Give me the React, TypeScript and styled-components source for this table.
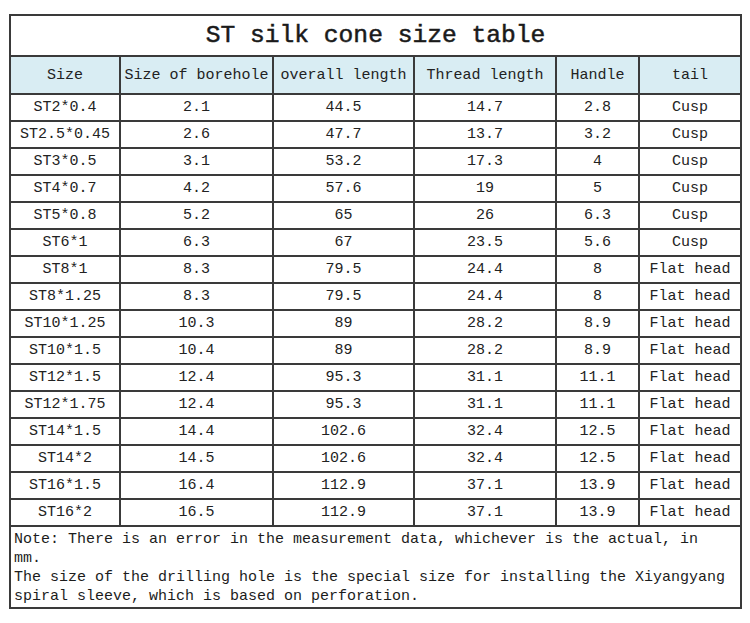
import styled, { createGlobalStyle } from "styled-components";

const GlobalStyle = createGlobalStyle`
  html, body {
    margin: 0;
    padding: 0;
    background: #ffffff;
  }
  body {
    font-family: "Liberation Mono", "DejaVu Sans Mono", monospace;
    color: #1c1c1c;
  }
`;

const ROWS: string[][] = [
  ["ST2*0.4", "2.1", "44.5", "14.7", "2.8", "Cusp"],
  ["ST2.5*0.45", "2.6", "47.7", "13.7", "3.2", "Cusp"],
  ["ST3*0.5", "3.1", "53.2", "17.3", "4", "Cusp"],
  ["ST4*0.7", "4.2", "57.6", "19", "5", "Cusp"],
  ["ST5*0.8", "5.2", "65", "26", "6.3", "Cusp"],
  ["ST6*1", "6.3", "67", "23.5", "5.6", "Cusp"],
  ["ST8*1", "8.3", "79.5", "24.4", "8", "Flat head"],
  ["ST8*1.25", "8.3", "79.5", "24.4", "8", "Flat head"],
  ["ST10*1.25", "10.3", "89", "28.2", "8.9", "Flat head"],
  ["ST10*1.5", "10.4", "89", "28.2", "8.9", "Flat head"],
  ["ST12*1.5", "12.4", "95.3", "31.1", "11.1", "Flat head"],
  ["ST12*1.75", "12.4", "95.3", "31.1", "11.1", "Flat head"],
  ["ST14*1.5", "14.4", "102.6", "32.4", "12.5", "Flat head"],
  ["ST14*2", "14.5", "102.6", "32.4", "12.5", "Flat head"],
  ["ST16*1.5", "16.4", "112.9", "37.1", "13.9", "Flat head"],
  ["ST16*2", "16.5", "112.9", "37.1", "13.9", "Flat head"],
];

const HEADERS = [
  "Size",
  "Size of borehole",
  "overall length",
  "Thread length",
  "Handle",
  "tail",
];

const WIDTHS = [110, 153, 141, 142, 83, 102];

const Page = styled.div`
  padding: 14px 10px 0 9px;
`;

const Table = styled.table`
  width: 731px;
  border-collapse: collapse;
  table-layout: fixed;
  border: 2px solid #3a3a3a;
  font-size: 15px;
`;

const TitleCell = styled.th`
  height: 39px;
  padding: 0;
  border: 2px solid #3a3a3a;
  font-size: 24.6px;
  font-weight: normal;
  -webkit-text-stroke: 0.5px #1a1a1a;
  text-align: center;
  color: #1a1a1a;
  vertical-align: middle;
`;

const HeadCell = styled.th`
  height: 36px;
  padding: 0;
  border: 2px solid #3a3a3a;
  background: #d9edf3;
  font-weight: normal;
  text-align: center;
  white-space: nowrap;
  color: #222;
`;

const Cell = styled.td`
  height: 25px;
  padding: 0;
  border: 2px solid #3a3a3a;
  text-align: center;
  white-space: nowrap;
  color: #222;
`;

const NoteCell = styled.td`
  padding: 3px 0 1px 3px;
  border: 2px solid #3a3a3a;
  line-height: 19px;
  color: #1c1c1c;
`;

const NoteText = styled.p`
  margin: 0;
  width: 716px;
`;

export default function App() {
  return (
    <>
      <GlobalStyle />
      <Page>
        <Table>
          <colgroup>
            {WIDTHS.map((w, i) => (
              <col key={i} style={{ width: w }} />
            ))}
          </colgroup>
          <thead>
            <tr>
              <TitleCell colSpan={6}>ST silk cone size table</TitleCell>
            </tr>
            <tr>
              {HEADERS.map((h) => (
                <HeadCell key={h}>{h}</HeadCell>
              ))}
            </tr>
          </thead>
          <tbody>
            {ROWS.map((row, r) => (
              <tr key={r}>
                {row.map((v, c) => (
                  <Cell key={c}>{v}</Cell>
                ))}
              </tr>
            ))}
            <tr>
              <NoteCell colSpan={6}>
                <NoteText>
                  Note: There is an error in the measurement data, whichever is
                  the actual, in mm.
                </NoteText>
                <NoteText>
                  The size of the drilling hole is the special size for
                  installing the Xiyangyang spiral sleeve, which is based on
                  perforation.
                </NoteText>
              </NoteCell>
            </tr>
          </tbody>
        </Table>
      </Page>
    </>
  );
}
